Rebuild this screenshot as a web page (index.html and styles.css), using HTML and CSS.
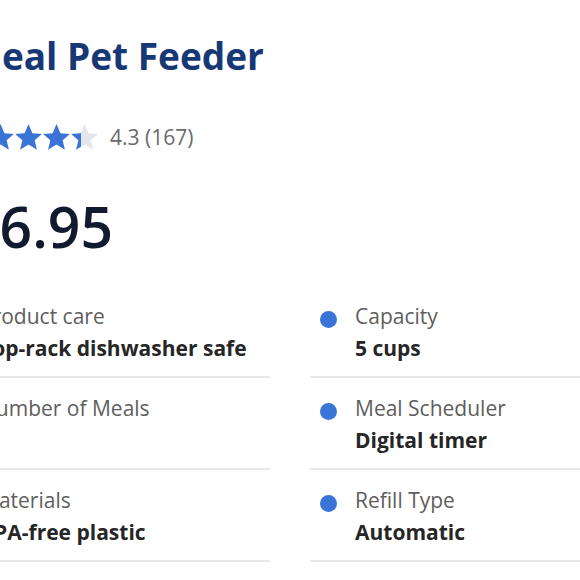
FILE: index.html
```html
<!DOCTYPE html>
<html lang="en">
<head>
<meta charset="utf-8">
<title>Meal Pet Feeder</title>
<link rel="stylesheet" href="styles.css">
</head>
<body>
<div class="page">
  <div class="header">
    <h1 class="title">Meal Pet Feeder</h1>
    <div class="rating">
      <div class="stars">
        <svg class="star" viewBox="2 2 20 19.4"><path d="M12 2l2.9 6.9 7.1.6-5.4 4.7 1.7 7L12 17.3 5.7 21.2l1.7-7L2 9.5l7.1-.6z"/></svg>
        <svg class="star" viewBox="2 2 20 19.4"><path d="M12 2l2.9 6.9 7.1.6-5.4 4.7 1.7 7L12 17.3 5.7 21.2l1.7-7L2 9.5l7.1-.6z"/></svg>
        <svg class="star" viewBox="2 2 20 19.4"><path d="M12 2l2.9 6.9 7.1.6-5.4 4.7 1.7 7L12 17.3 5.7 21.2l1.7-7L2 9.5l7.1-.6z"/></svg>
        <svg class="star" viewBox="2 2 20 19.4"><path d="M12 2l2.9 6.9 7.1.6-5.4 4.7 1.7 7L12 17.3 5.7 21.2l1.7-7L2 9.5l7.1-.6z"/></svg>
        <svg class="star" viewBox="2 2 20 19.4">
          <defs><linearGradient id="part"><stop offset="38%" stop-color="#3a74d6"/><stop offset="38%" stop-color="#e3e6eb"/></linearGradient></defs>
          <path fill="url(#part)" d="M12 2l2.9 6.9 7.1.6-5.4 4.7 1.7 7L12 17.3 5.7 21.2l1.7-7L2 9.5l7.1-.6z"/>
        </svg>
      </div>
      <span class="rating-text">4.3 (167)</span>
    </div>
    <div class="price">$6.95</div>
  </div>
  <div class="specs">
    <div class="spec"><span class="dot"></span><div class="spec-text"><div class="label">Product care</div><div class="value">Top-rack dishwasher safe</div></div></div>
    <div class="spec"><span class="dot"></span><div class="spec-text"><div class="label">Capacity</div><div class="value">5 cups</div></div></div>
    <div class="spec"><span class="dot"></span><div class="spec-text"><div class="label">Number of Meals</div><div class="value">&nbsp;</div></div></div>
    <div class="spec"><span class="dot"></span><div class="spec-text"><div class="label">Meal Scheduler</div><div class="value">Digital timer</div></div></div>
    <div class="spec"><span class="dot"></span><div class="spec-text"><div class="label">Materials</div><div class="value">BPA-free plastic</div></div></div>
    <div class="spec"><span class="dot"></span><div class="spec-text"><div class="label">Refill Type</div><div class="value">Automatic</div></div></div>
  </div>
</div>
</body>
</html>
```
FILE: styles.css
```css
html, body {
  margin: 0;
  padding: 0;
  background: #ffffff;
  overflow: hidden;
}
body {
  font-family: "Open Sans", "Liberation Sans", sans-serif;
  width: 580px;
  height: 580px;
}
.page {
  margin-left: -65px;
  padding-top: 34px;
  width: 720px;
}
.header {
  padding-left: 32px;
}
.title {
  margin: 0;
  font-size: 37px;
  line-height: 44px;
  font-weight: 700;
  color: #163875;
  letter-spacing: 0;
}
.rating {
  display: flex;
  align-items: center;
  margin-top: 45px;
  margin-left: -8px;
  height: 28px;
}
.stars {
  display: flex;
  gap: 1px;
}
.star {
  width: 27px;
  height: 26px;
  fill: #3a74d6;
  display: block;
}
.rating-text {
  margin-left: 12px;
  font-size: 21px;
  color: #6b6b6b;
  line-height: 28px;
}
.price {
  margin-top: 47px;
  font-size: 57px;
  line-height: 57px;
  font-weight: 600;
  color: #111a2e;
}
.specs {
  margin-top: 31px;
  display: grid;
  grid-template-columns: 335px 335px;
  column-gap: 40px;
}
.spec {
  display: flex;
  align-items: flex-start;
  padding: 14px 0 12px 0;
  border-bottom: 2px solid #e8e8e8;
}
.dot {
  width: 17px;
  height: 17px;
  border-radius: 50%;
  background: #3a74d6;
  margin-left: 10px;
  margin-top: 11px;
  flex: none;
}
.spec-text {
  margin-left: 18px;
}
.label {
  font-size: 21px;
  line-height: 32px;
  color: #5e5e5e;
}
.value {
  font-size: 21px;
  line-height: 32px;
  font-weight: 700;
  color: #262626;
}
```
